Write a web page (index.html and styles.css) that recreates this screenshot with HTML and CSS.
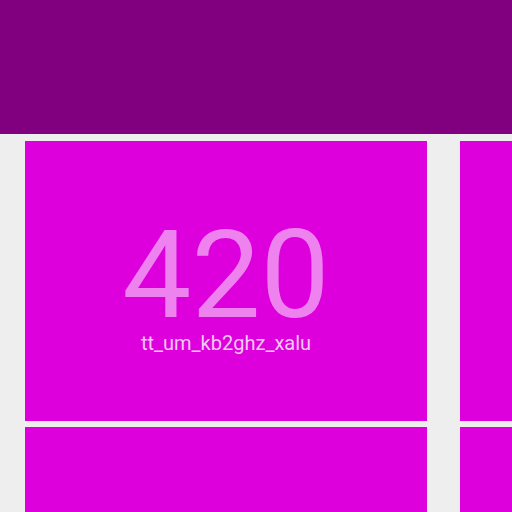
FILE: index.html
```html
<!DOCTYPE html>
<html>
<head>
<meta charset="utf-8">
<link rel="stylesheet" href="styles.css">
</head>
<body>
<header class="topbar"></header>
<main class="grid">
  <div class="card">
    <div class="value">420</div>
    <div class="label">tt_um_kb2ghz_xalu</div>
  </div>
  <div class="card"></div>
  <div class="card"></div>
  <div class="card"></div>
</main>
</body>
</html>
```
FILE: styles.css
```css
html, body {
  margin: 0;
  padding: 0;
  background: #eeeeee;
  overflow: hidden;
  width: 512px;
  height: 512px;
  font-family: Roboto, "Noto Sans", sans-serif;
}
.topbar {
  height: 134px;
  background: #800080;
}
.grid {
  display: grid;
  grid-template-columns: 402px 402px;
  grid-auto-rows: 280px;
  column-gap: 33px;
  row-gap: 6px;
  padding: 7px 0 0 25px;
}
.card {
  background: #dd00dd;
  display: flex;
  flex-direction: column;
  align-items: center;
  justify-content: flex-start;
  padding-top: 73px;
  box-sizing: border-box;
}
.value {
  font-size: 123px;
  line-height: 123px;
  color: #ee82ee;
}
.label {
  font-size: 20px;
  line-height: 23px;
  color: #f4c8f4;
  margin-top: -5px;
}
```
